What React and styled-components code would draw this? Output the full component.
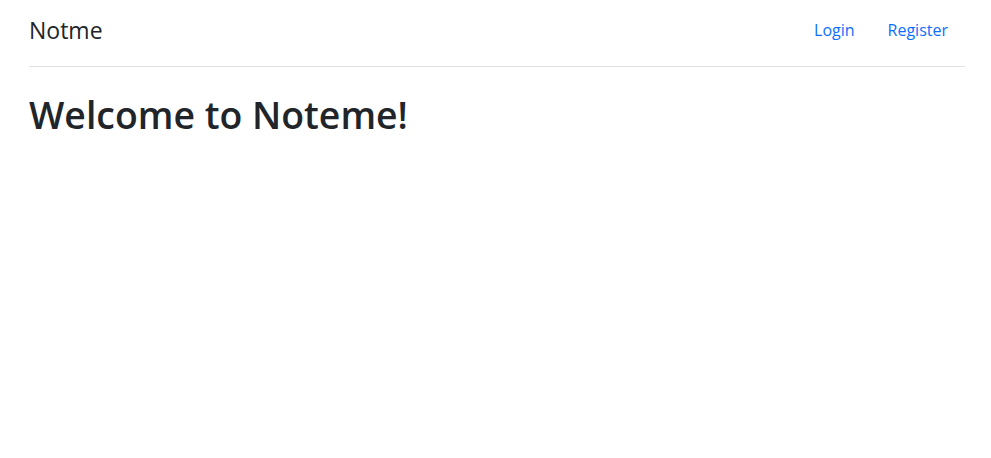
import React from "react";
import styled, { createGlobalStyle } from "styled-components";

const Global = createGlobalStyle`
  html, body { margin: 0; padding: 0; background: #fff; }
  body { font-family: "Open Sans", "Noto Sans", sans-serif; color: #212529; }
`;

const Page = styled.div`
  padding: 0 26px 0 29px;
`;

const Navbar = styled.nav`
  display: flex;
  align-items: center;
  justify-content: space-between;
  padding: 14px 0 19px;
  border-bottom: 1px solid #dee2e6;
`;

const Brand = styled.a`
  font-size: 23px;
  line-height: 33px;
  color: #212529;
  text-decoration: none;
`;

const NavLinks = styled.div`
  display: flex;
  align-items: center;
`;

const NavLink = styled.a`
  font-size: 16px;
  line-height: 24px;
  padding: 0 17px 2px 16px;
  color: #0d6efd;
  text-decoration: none;
`;

const Title = styled.h1`
  margin: 26px 0 0;
  font-size: 37.4px;
  line-height: 1.2;
  font-weight: 600;
  color: #212529;
`;

export default function App() {
  return (
    <>
      <Global />
      <Page>
        <Navbar>
          <Brand href="#">Notme</Brand>
          <NavLinks>
            <NavLink href="#">Login</NavLink>
            <NavLink href="#">Register</NavLink>
          </NavLinks>
        </Navbar>
        <Title>Welcome to Noteme!</Title>
      </Page>
    </>
  );
}
